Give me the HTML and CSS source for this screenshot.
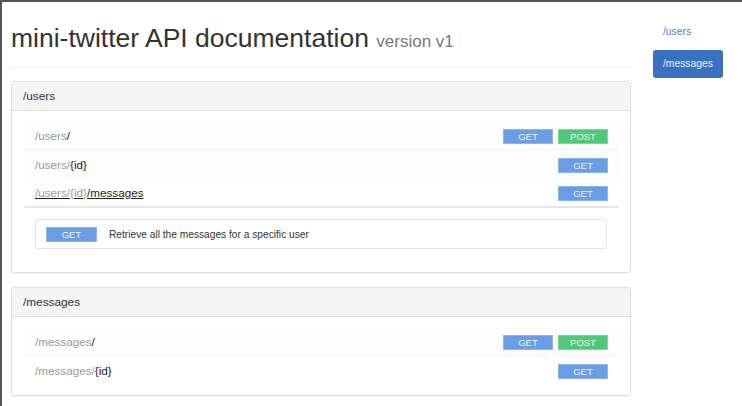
FILE: index.html
```html
<!DOCTYPE html>
<html>
<head>
<meta charset="utf-8">
<link rel="stylesheet" href="styles.css">
</head>
<body>
<div class="frame">
  <div class="main">
    <h1 class="title">mini-twitter API documentation <small>version v1</small></h1>

    <section class="panel">
      <div class="panel-heading">/users</div>
      <div class="panel-body">
        <div class="row shade">
          <span class="path"><span class="base">/users</span>/</span>
          <span class="badges"><span class="badge get">GET</span><span class="badge post">POST</span></span>
        </div>
        <div class="row shade">
          <span class="path"><span class="base">/users/</span>{id}</span>
          <span class="badges"><span class="badge get">GET</span></span>
        </div>
        <div class="row active">
          <span class="path link"><span class="base">/users/{id}</span>/messages</span>
          <span class="badges"><span class="badge get">GET</span></span>
        </div>
        <div class="detail">
          <span class="badge get wide">GET</span>
          <span class="desc">Retrieve all the messages for a specific user</span>
        </div>
      </div>
    </section>

    <section class="panel">
      <div class="panel-heading">/messages</div>
      <div class="panel-body short">
        <div class="row shade">
          <span class="path"><span class="base">/messages</span>/</span>
          <span class="badges"><span class="badge get">GET</span><span class="badge post">POST</span></span>
        </div>
        <div class="row">
          <span class="path"><span class="base">/messages/</span>{id}</span>
          <span class="badges"><span class="badge get">GET</span></span>
        </div>
      </div>
    </section>
  </div>

  <nav class="nav">
    <a class="pill">/users</a>
    <a class="pill current">/messages</a>
  </nav>
</div>
</body>
</html>
```

FILE: styles.css
```css
html, body {
  margin: 0;
  padding: 0;
  background: #fff;
}
body {
  font-family: "Liberation Sans", Arial, sans-serif;
  color: #333;
}
.frame {
  box-sizing: border-box;
  height: 406px;
  border-top: 2px solid #555;
  border-left: 2px solid #555;
  display: flex;
  align-items: flex-start;
  padding-left: 9px;
}
.main {
  width: 620px;
  flex: none;
}
.title {
  margin: 22px 0 13px;
  padding-bottom: 11px;
  border-bottom: 1px solid #eee;
  font-size: 26.5px;
  font-weight: normal;
  line-height: 29px;
  color: #333;
}
.title small {
  font-size: 17px;
  color: #777;
}
.panel {
  border: 1px solid #ddd;
  border-radius: 3px;
  margin-bottom: 14px;
  box-shadow: 0 1px 1px rgba(0,0,0,0.04);
}
.panel-heading {
  background: #f5f5f5;
  border-bottom: 1px solid #ddd;
  padding: 0 11px;
  height: 28px;
  line-height: 28px;
  font-size: 11.8px;
  color: #333;
}
.panel-body {
  padding: 10px 11px 23px 12px;
}
.panel-body.short {
  padding-bottom: 11px;
}
.row {
  display: flex;
  align-items: center;
  justify-content: space-between;
  height: 28px;
  padding: 0 11px;
  border-bottom: 1px solid #f4f4f4;
}
.row.shade {
  background: #fdfdfd;
}
.row.active {
  height: 27px;
  border-bottom: 2px solid #e6e6e6;
}
.row:last-child {
  border-bottom: none;
}
.path {
  font-size: 11.7px;
  color: #222;
}
.path .base {
  color: #999;
}
.path.link {
  text-decoration: underline;
  font-weight: 500;
}
.path.link .base {
  font-weight: normal;
}
.badges {
  display: flex;
  gap: 5px;
  padding-top: 2px;
}
.badge {
  display: inline-block;
  box-sizing: border-box;
  width: 50px;
  height: 15px;
  line-height: 13px;
  text-align: center;
  font-size: 9.5px;
  color: #eef4fc;
}
.badge.get {
  background: #699ee5;
  border: 1px solid #8db5ee;
}
.badge.post {
  background: #50c878;
  border: 1px solid #7ad89a;
}
.badge.wide {
  width: 51px;
}
.detail {
  display: flex;
  align-items: center;
  gap: 12px;
  margin: 11px 12px 0 11px;
  height: 30px;
  box-sizing: border-box;
  border: 1px solid #e3e3e3;
  border-radius: 3px;
  padding: 0 10px;
}
.desc {
  font-size: 10.2px;
  color: #333;
}
.nav {
  margin-left: 22px;
  margin-top: 16px;
  display: flex;
  flex-direction: column;
  gap: 4px;
  width: 70px;
}
.pill {
  display: block;
  height: 28px;
  line-height: 28px;
  padding: 0 10px;
  border-radius: 3px;
  font-size: 10.3px;
  color: #4a7fc9;
  white-space: nowrap;
}
.pill.current {
  background: #3a70c0;
  color: #eef3fb;
}
```
